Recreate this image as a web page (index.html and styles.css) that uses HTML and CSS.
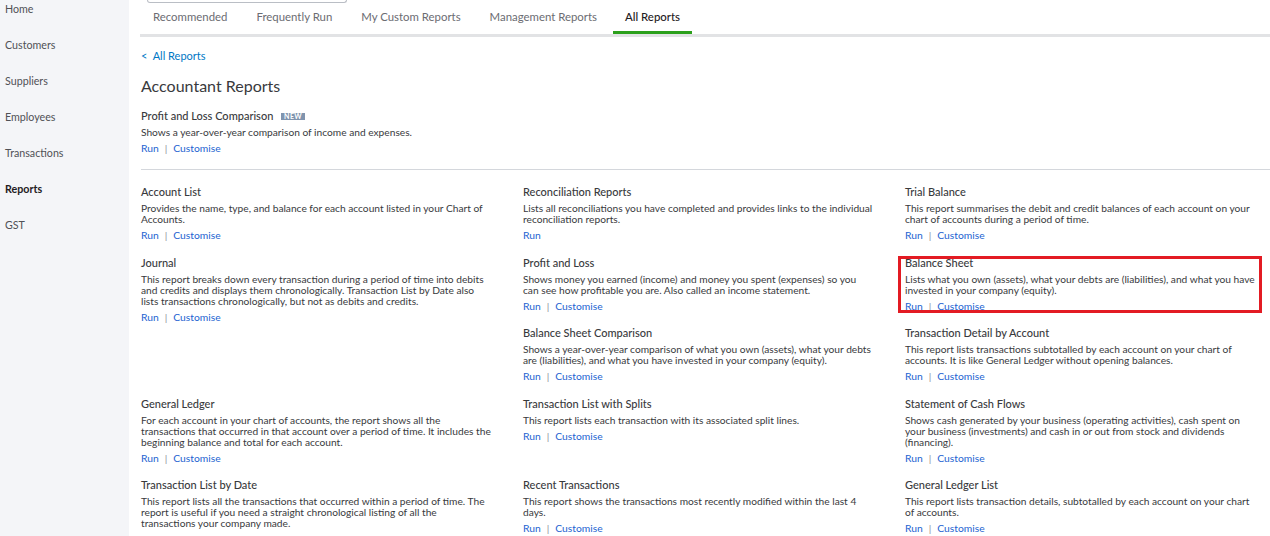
FILE: index.html
```html
<!DOCTYPE html>
<html lang="en">
<head>
<meta charset="utf-8">
<title>Reports</title>
<link rel="stylesheet" href="styles.css">
</head>
<body>
<div class="app">
  <nav class="sidebar">
    <a class="nav-item">Home</a>
    <a class="nav-item">Customers</a>
    <a class="nav-item">Suppliers</a>
    <a class="nav-item">Employees</a>
    <a class="nav-item">Transactions</a>
    <a class="nav-item active">Reports</a>
    <a class="nav-item">GST</a>
  </nav>
  <main class="main">
    <div class="search-stub"></div>
    <div class="tabs">
      <a class="tab">Recommended</a>
      <a class="tab">Frequently Run</a>
      <a class="tab">My Custom Reports</a>
      <a class="tab">Management Reports</a>
      <a class="tab active">All Reports</a>
    </div>
    <a class="back">&lt;&nbsp; All Reports</a>
    <h1 class="page-title">Accountant Reports</h1>
    <section class="featured">
      <div class="report">
        <div class="report-title">Profit and Loss Comparison <span class="badge">NEW</span></div>
        <p class="report-desc">Shows a year-over-year comparison of income and expenses.</p>
        <div class="report-links"><a>Run</a><span class="sep">|</span><a>Customise</a></div>
      </div>
    </section>
    <hr class="divider">
    <div class="report-grid">
      <div class="report">
        <div class="report-title">Account List</div>
        <p class="report-desc">Provides the name, type, and balance for each account listed in your Chart of Accounts.</p>
        <div class="report-links"><a>Run</a><span class="sep">|</span><a>Customise</a></div>
      </div>
      <div class="report">
        <div class="report-title">Reconciliation Reports</div>
        <p class="report-desc">Lists all reconciliations you have completed and provides links to the individual reconciliation reports.</p>
        <div class="report-links"><a>Run</a></div>
      </div>
      <div class="report">
        <div class="report-title">Trial Balance</div>
        <p class="report-desc">This report summarises the debit and credit balances of each account on your chart of accounts during a period of time.</p>
        <div class="report-links"><a>Run</a><span class="sep">|</span><a>Customise</a></div>
      </div>
      <div class="report span-2">
        <div class="report-title">Journal</div>
        <p class="report-desc">This report breaks down every transaction during a period of time into debits and credits and displays them chronologically. Transaction List by Date also lists transactions chronologically, but not as debits and credits.</p>
        <div class="report-links"><a>Run</a><span class="sep">|</span><a>Customise</a></div>
      </div>
      <div class="report">
        <div class="report-title">Profit and Loss</div>
        <p class="report-desc">Shows money you earned (income) and money you spent (expenses) so you can see how profitable you are. Also called an income statement.</p>
        <div class="report-links"><a>Run</a><span class="sep">|</span><a>Customise</a></div>
      </div>
      <div class="report highlighted">
        <div class="report-title">Balance Sheet</div>
        <p class="report-desc">Lists what you own (assets), what your debts are (liabilities), and what you have invested in your company (equity).</p>
        <div class="report-links"><a>Run</a><span class="sep">|</span><a>Customise</a></div>
      </div>
      <div class="report">
        <div class="report-title">Balance Sheet Comparison</div>
        <p class="report-desc">Shows a year-over-year comparison of what you own (assets), what your debts are (liabilities), and what you have invested in your company (equity).</p>
        <div class="report-links"><a>Run</a><span class="sep">|</span><a>Customise</a></div>
      </div>
      <div class="report">
        <div class="report-title">Transaction Detail by Account</div>
        <p class="report-desc">This report lists transactions subtotalled by each account on your chart of accounts. It is like General Ledger without opening balances.</p>
        <div class="report-links"><a>Run</a><span class="sep">|</span><a>Customise</a></div>
      </div>
      <div class="report">
        <div class="report-title">General Ledger</div>
        <p class="report-desc">For each account in your chart of accounts, the report shows all the transactions that occurred in that account over a period of time. It includes the beginning balance and total for each account.</p>
        <div class="report-links"><a>Run</a><span class="sep">|</span><a>Customise</a></div>
      </div>
      <div class="report">
        <div class="report-title">Transaction List with Splits</div>
        <p class="report-desc">This report lists each transaction with its associated split lines.</p>
        <div class="report-links"><a>Run</a><span class="sep">|</span><a>Customise</a></div>
      </div>
      <div class="report">
        <div class="report-title">Statement of Cash Flows</div>
        <p class="report-desc">Shows cash generated by your business (operating activities), cash spent on your business (investments) and cash in or out from stock and dividends (financing).</p>
        <div class="report-links"><a>Run</a><span class="sep">|</span><a>Customise</a></div>
      </div>
      <div class="report">
        <div class="report-title">Transaction List by Date</div>
        <p class="report-desc">This report lists all the transactions that occurred within a period of time. The report is useful if you need a straight chronological listing of all the transactions your company made.</p>
        <div class="report-links"><a>Run</a><span class="sep">|</span><a>Customise</a></div>
      </div>
      <div class="report">
        <div class="report-title">Recent Transactions</div>
        <p class="report-desc">This report shows the transactions most recently modified within the last 4 days.</p>
        <div class="report-links"><a>Run</a><span class="sep">|</span><a>Customise</a></div>
      </div>
      <div class="report">
        <div class="report-title">General Ledger List</div>
        <p class="report-desc">This report lists transaction details, subtotalled by each account on your chart of accounts.</p>
        <div class="report-links"><a>Run</a><span class="sep">|</span><a>Customise</a></div>
      </div>
    </div>
  </main>
</div>
</body>
</html>
```

FILE: styles.css
```css
html, body {
  margin: 0;
  padding: 0;
  height: 100%;
  overflow: hidden;
}

body {
  font-family: Lato, "Open Sans", "Liberation Sans", sans-serif;
  color: #393a3d;
  background: #ffffff;
}

.app {
  display: flex;
  height: 536px;
}

/* Sidebar */
.sidebar {
  flex: none;
  width: 129px;
  background: #f4f5f8;
  padding-top: 3px;
  display: flex;
  flex-direction: column;
}

.nav-item {
  font-size: 10.7px;
  line-height: 12px;
  padding: 0 0 24px 5px;
  color: #505156;
}

.nav-item.active {
  font-weight: 700;
  color: #1f2023;
}

/* Main area */
.main {
  flex: 1;
  min-width: 0;
  padding-left: 12px;
  overflow: hidden;
}

.search-stub {
  margin-left: 6px;
  width: 198px;
  height: 2px;
  border: 1px solid #babec5;
  border-top: none;
  border-radius: 0 0 3px 3px;
}

.tabs {
  display: flex;
  gap: 3px;
  margin-left: -1px;
  border-bottom: 3px solid #e2e3e5;
}

.tab {
  padding: 7px 13px;
  font-size: 11.4px;
  line-height: 14px;
  color: #6b6c72;
  border-bottom: 3px solid transparent;
}

.tab.active {
  color: #1f2023;
  font-weight: 500;
  padding: 7px 12px;
  border-bottom-color: #2ca01c;
}

.back {
  display: block;
  margin-top: 12px;
  font-size: 11px;
  line-height: 14px;
  color: #0077c5;
}

.page-title {
  margin: 13px 0 0;
  font-size: 16px;
  line-height: 20px;
  font-weight: 400;
  color: #393a3d;
}

.featured {
  margin-top: 13px;
}

/* Report block */
.report {
  position: relative;
}

.report-title {
  font-size: 11px;
  line-height: 14px;
  font-weight: 500;
  color: #393a3d;
}

.badge {
  display: inline-block;
  margin-left: 5px;
  padding: 0 3px;
  font-size: 7px;
  line-height: 7px;
  font-weight: 700;
  letter-spacing: 0.4px;
  color: #ffffff;
  background: #8094ae;
  vertical-align: 1px;
}

.report-desc {
  margin: 4px 0 0;
  font-size: 10.2px;
  line-height: 11px;
  color: #393a3d;
}

.report-links {
  margin-top: 3px;
  font-size: 10.3px;
  line-height: 14px;
  color: #1d63d1;
}

.sep {
  margin: 0 6px;
  color: #8d9096;
}

.divider {
  margin: 14px 0 0;
  border: 0;
  border-top: 1px solid #d4d7dc;
}

.report-grid {
  margin-top: 15px;
  display: grid;
  grid-template-columns: repeat(3, 350px);
  column-gap: 32px;
  row-gap: 13.5px;
  align-items: start;
}

.report.span-2 {
  grid-row: span 2;
}

.report.highlighted::after {
  content: "";
  position: absolute;
  top: 0;
  left: -7px;
  right: -7px;
  bottom: 0;
  border: 3px solid #e31b23;
  pointer-events: none;
}
```
